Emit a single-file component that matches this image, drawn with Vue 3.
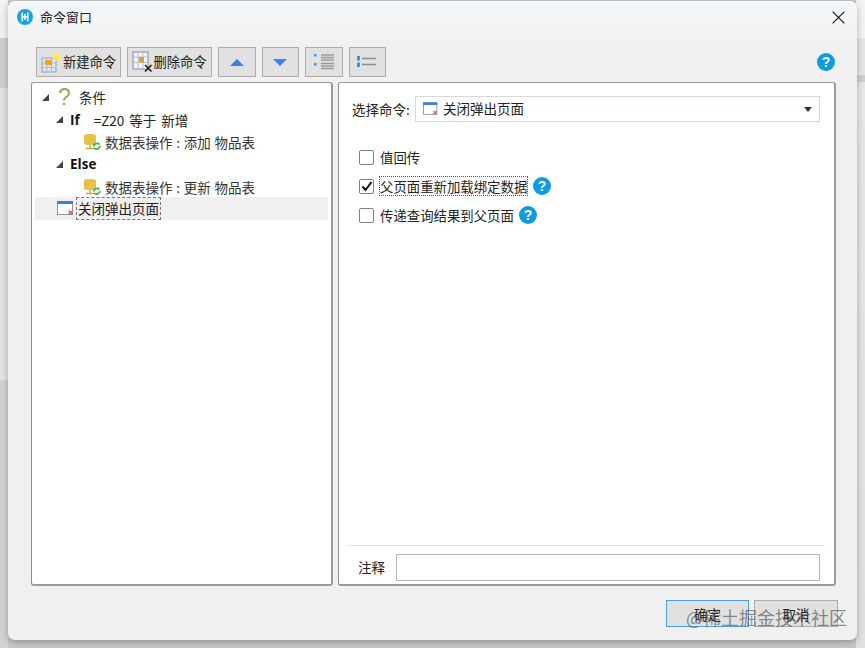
<script setup>
const tree = [
  { kind: 'root', label: '条件' },
  { kind: 'branch', label: 'If', extra: '=Z20 等于 新增' },
  { kind: 'data', label: '数据表操作 : 添加 物品表' },
  { kind: 'branch', label: 'Else', extra: '' },
  { kind: 'data', label: '数据表操作 : 更新 物品表' },
  { kind: 'close', label: '关闭弹出页面' }
]
const checks = [
  { label: '值回传', checked: false, help: false },
  { label: '父页面重新加载绑定数据', checked: true, help: true, focus: true },
  { label: '传递查询结果到父页面', checked: false, help: true }
]
</script>

<template>
  <div class="screen">
    <section class="dialog">
      <header class="titlebar">
        <span class="logo">
          <svg width="16" height="16" viewBox="0 0 16 16"><circle cx="8" cy="8" r="8" fill="#1aa3e0"/><path d="M5.200 3.500v9M10.800 3.500v9M5.200 8h5.600M8 5v6" stroke="#fff" stroke-width="1.500" fill="none"/></svg>
        </span>
        <span class="title">命令窗口</span>
        <svg class="close" width="13" height="13" viewBox="0 0 13 13"><path d="M.6.6l11.800 11.800M12.400.6L.6 12.400" stroke="#222" stroke-width="1.300"/></svg>
      </header>

      <div class="toolbar">
        <button class="tbtn text-btn new-btn">
          <svg width="22" height="24" viewBox="0 0 22 24"><rect x="1" y="8" width="14" height="14" fill="#dbe8f5" stroke="#8aa3bd"/><path d="M1 13h14M1 17.500h14M6 8v14M10.500 8v14" stroke="#a9bdd1"/><rect x="4" y="10" width="7" height="5" fill="#f4a21f"/><path d="M15 1l1.300 3.500 3.500-1.500-1.700 3.200 3.400 1.300-3.400 1 1 3.500-3.200-2-1.900 2.500-.5-3.500-3-1 3-1.500-1-3.200 2.800 1.200z" fill="#ffe455"/></svg>
          <span class="btn-text">新建命令</span>
        </button>
        <button class="tbtn text-btn del-btn">
          <svg width="21" height="24" viewBox="0 0 21 24"><rect x="1" y="2" width="15" height="17" fill="#f1f5f9" stroke="#7f8c99"/><path d="M1 7h15M1 12.500h15M6 2v17M11 2v17" stroke="#b4c2cf"/><rect x="7" y="7" width="5" height="5.500" fill="#ef9a2a"/><path d="M13 15l6.500 6.500M19.500 15L13 21.500" stroke="#222" stroke-width="1.700"/></svg>
          <span class="btn-text">删除命令</span>
        </button>
        <button class="tbtn icon-btn"><svg width="14" height="7" viewBox="0 0 14 7"><path d="M7 0l7 7H0z" fill="#3b82e8"/></svg></button>
        <button class="tbtn icon-btn"><svg width="14" height="7" viewBox="0 0 14 7"><path d="M0 0h14L7 7z" fill="#3b82e8"/></svg></button>
        <button class="tbtn icon-btn">
          <svg width="22" height="16" viewBox="0 0 22 16"><rect x="1" y="0" width="2.500" height="2.500" fill="#4a90e2"/><rect x="1" y="9" width="2.500" height="2.500" fill="#4a90e2"/><path d="M8 1h13M8 3.500h13M8 6h13M8 9.500h13M8 12h13M8 14.500h13" stroke="#9a9a9a" stroke-width="1.400"/></svg>
        </button>
        <button class="tbtn icon-btn">
          <svg width="20" height="12" viewBox="0 0 20 12"><path d="M1.500 0v4.500M1.500 6.500v4.500" stroke="#2f7fd8" stroke-width="2.600"/><path d="M5 2.500h14M5 8.500h14" stroke="#8d8d8d" stroke-width="1.400"/></svg>
        </button>
        <span class="toolbar-spacer"></span>
        <svg class="help top-help" width="18" height="18" viewBox="0 0 18 18"><circle cx="9" cy="9" r="9" fill="#0f9be3"/><text x="9" y="14" text-anchor="middle" class="help-mark" font-size="14">?</text></svg>
      </div>

      <div class="panes">
        <div class="tree-pane">
          <div v-for="row in tree" :key="row.label" class="tree-row" :class="`row-${row.kind}`">
            <span v-if="row.kind === 'root' || row.kind === 'branch'" class="caret"></span>
            <span v-if="row.kind === 'root'" class="question">?</span>
            <svg v-if="row.kind === 'data'" class="row-icon" width="17" height="18" viewBox="0 0 17 18">
              <path d="M0 2.500C0 .5 12 .5 12 2.500v8c0 2-12 2-12 0z" fill="#e8c14a"/>
              <path d="M6 12v3M2 15.500h8" stroke="#c9a634" stroke-width="1.400"/>
              <path d="M9.500 13.500a3.500 3.500 0 0 1 6-2M16 13a3.500 3.500 0 0 1-6 2" stroke="#3fb54a" stroke-width="1.800" fill="none"/>
            </svg>
            <svg v-if="row.kind === 'close'" class="row-icon" width="18" height="15" viewBox="0 0 18 15">
              <rect x=".5" y=".5" width="15" height="13" fill="#fff" stroke="#8a97a8"/>
              <rect x="0" y="0" width="16" height="3" fill="#3f7fd6"/>
              <path d="M11.500 9.500l4 4M15.500 9.500l-4 4" stroke="#e2504a" stroke-width="1.200"/>
            </svg>
            <b v-if="row.kind === 'branch'" class="branch-label">{{ row.label }}</b>
            <span v-else class="row-label">{{ row.label }}</span>
            <span v-if="row.extra" class="row-extra">{{ row.extra }}</span>
          </div>
        </div>

        <div class="detail-pane">
          <div class="select-row">
            <span class="select-label">选择命令:</span>
            <div class="select">
              <svg width="16" height="14" viewBox="0 0 18 15">
                <rect x=".5" y=".5" width="15" height="13" fill="#fff" stroke="#8a97a8"/>
                <rect x="0" y="0" width="16" height="3" fill="#3f7fd6"/>
                <path d="M11.500 9.500l4 4M15.500 9.500l-4 4" stroke="#e2504a" stroke-width="1.200"/>
              </svg>
              <span class="select-text">关闭弹出页面</span>
              <span class="select-arrow"></span>
            </div>
          </div>

          <div class="checks">
            <label v-for="c in checks" :key="c.label" class="check-row">
              <span class="box">
                <svg v-if="c.checked" width="12" height="11" viewBox="0 0 12 11"><path d="M1.500 5.500l3 3.500 6-8" stroke="#111" stroke-width="2" fill="none"/></svg>
              </span>
              <span class="check-label" :class="{ focused: c.focus }">{{ c.label }}</span>
              <svg v-if="c.help" class="help" width="18" height="18" viewBox="0 0 18 18"><circle cx="9" cy="9" r="9" fill="#0f9be3"/><text x="9" y="14" text-anchor="middle" class="help-mark" font-size="14">?</text></svg>
            </label>
          </div>

          <div class="note-row">
            <span class="note-label">注释</span>
            <div class="note-input"></div>
          </div>
        </div>
      </div>

      <footer class="footer">
        <button class="dbtn primary">确定</button>
        <button class="dbtn">取消</button>
      </footer>
    </section>
    <span class="watermark">@稀土掘金技术社区</span>
  </div>
</template>

<style>
html, body { margin: 0; padding: 0; background: #c9c9c9; overflow: hidden; }
</style>

<style scoped>
.screen {
  position: relative;
  width: 865px;
  height: 648px;
  overflow: hidden;
  background:
    linear-gradient(#f2f2f2 0, #f2f2f2 38px, #cfcfcf 38px, #cfcfcf 88px, #e4e4e4 88px, #e4e4e4 380px, #d2d2d2 380px, #d2d2d2 100%) left top / 8px 100% no-repeat,
    linear-gradient(#f4f4f4 0, #f4f4f4 38px, #e6e6e6 38px, #e6e6e6 75px, #cfcfcf 75px, #cfcfcf 82px, #e8e8e8 82px, #e0e0e0 100%) right top / 9px 100% no-repeat,
    #c8c8c8;
  font-family: "Noto Sans CJK SC", "Liberation Sans", sans-serif;
  font-size: 13.5px;
  color: #222;
  padding: 1px 8px 8px;
  box-sizing: border-box;
}
.dialog {
  height: 639px;
  background: #f0f0f0;
  border-radius: 7px;
  box-shadow: 0 2px 7px rgba(0, 0, 0, .28);
  display: flex;
  flex-direction: column;
  box-sizing: border-box;
}
.titlebar {
  height: 46px;
  flex: none;
  display: flex;
  align-items: center;
  padding: 0 12px 14px 9px;
  box-sizing: border-box;
  background: linear-gradient(#f4f8fb, #f0f0f0);
  border-radius: 7px 7px 0 0;
}
.logo { display: flex; width: 16px; height: 16px; }
.title { margin-left: 7px; font-size: 13px; color: #222; position: relative; top: -1px; }
.close { margin-left: auto; }
.toolbar {
  flex: none;
  display: flex;
  align-items: flex-start;
  height: 35px;
  padding-left: 28px;
  padding-right: 22px;
  gap: 6px;
}
.tbtn {
  height: 30px;
  background: #e1e1e1;
  border: 1px solid #adadad;
  box-sizing: border-box;
  display: flex;
  align-items: center;
  justify-content: center;
  padding: 0;
  font: inherit;
  color: #222;
  white-space: nowrap;
  flex: none;
}
.text-btn { width: 85px; font-size: 13.300px; }
.btn-text { position: relative; top: -1px; }
.icon-btn { width: 37.500px; }
.toolbar-spacer { flex: 1; }
.top-help { margin-top: 6px; flex: none; }
.panes {
  flex: none;
  display: flex;
  gap: 5px;
  height: 504px;
  margin-left: 23px;
  margin-right: 21px;
}
.tree-pane, .detail-pane {
  background: #fff;
  border: 1px solid #9b9b9b;
  border-width: 1px 2px 2px 1px;
  border-left-color: #8f8f8f;
  border-radius: 3px;
  box-sizing: border-box;
}
.tree-pane { width: 302px; flex: none; padding-top: 3px; }
.detail-pane {
  flex: 1;
  min-width: 0;
  display: flex;
  flex-direction: column;
  padding: 13px 13px 3px 13px;
}
.tree-row {
  height: 22.400px;
  display: flex;
  align-items: center;
  white-space: nowrap;
  position: relative;
  line-height: 20px;
}
.caret {
  width: 0; height: 0;
  border-style: solid;
  border-width: 0 0 7px 7px;
  border-color: transparent transparent #444 transparent;
  flex: none;
}
.row-root { padding-left: 10px; }
.question {
  margin-left: 8px;
  width: 15px;
  color: #8fb051;
  font-size: 23px;
  font-family: "Liberation Sans", sans-serif;
  text-align: center;
}
.row-root .row-label { margin-left: 7px; }
.row-branch { padding-left: 24px; }
.branch-label { margin-left: 7px; font-family: "Open Sans", sans-serif; font-weight: 700; font-size: 13.500px; color: #111; }
.row-extra { margin-left: 14px; word-spacing: 2px; }
.row-data { padding-left: 52px; }
.row-icon { flex: none; }
.row-data .row-label { margin-left: 4px; color: #333; word-spacing: .7px; }
.row-close {
  padding-left: 22px;
  margin: 0 3px;
  background: #f0f0f0;
  height: 23px;
  margin-top: -1px;
}
.row-close .row-label {
  margin-left: 1px;
  padding: 0 1px;
  border: 1px dashed #777;
  line-height: 21px;
}
.select-row { display: flex; align-items: center; flex: none; }
.select-label { width: 63px; flex: none; }
.select {
  width: 405px;
  height: 26px;
  background: #fff;
  border: 1px solid #d4d9df;
  box-sizing: border-box;
  display: flex;
  align-items: center;
  padding: 0 7px;
}
.select-text { margin-left: 4px; position: relative; top: -1px; }
.select-arrow {
  margin-left: auto;
  width: 0; height: 0;
  border-style: solid;
  border-width: 5px 4px 0 4px;
  border-color: #333 transparent transparent transparent;
}
.checks {
  flex: none;
  display: flex;
  flex-direction: column;
  margin-top: 24px;
  gap: 7px;
  margin-left: 7px;
}
.check-row { display: flex; align-items: center; height: 22px; }
.box {
  width: 15px; height: 15px;
  border: 1px solid #7f7f7f;
  background: #fff;
  border-radius: 2px;
  box-sizing: border-box;
  display: flex;
  align-items: center;
  justify-content: center;
  flex: none;
}
.check-label { margin-left: 6px; white-space: nowrap; font-size: 13.400px; }
.check-label.focused { border: 1px dotted #555; margin-left: 5px; line-height: 18px; }
.check-row .help { margin-left: 5px; flex: none; }
.help-mark { fill: #fff; font-weight: 700; font-family: "Liberation Sans", sans-serif; }
.note-row {
  margin-top: auto;
  border-top: 1px solid #e3e3e3;
  display: flex;
  align-items: center;
  padding-top: 8px;
  margin-left: -5px;
  margin-right: -4px;
}
.note-label { margin-left: 11px; width: 38px; flex: none; position: relative; top: -1px; }
.note-input {
  width: 424px;
  flex: none;
  height: 27px;
  border: 1px solid #b5b5b5;
  background: #fff;
  box-sizing: border-box;
}
.footer {
  flex: 1;
  display: flex;
  justify-content: flex-end;
  align-items: flex-start;
  gap: 5px;
  padding: 14px 19px 0 0;
}
.dbtn {
  width: 84px;
  height: 27px;
  background: #e1e1e1;
  border: 1px solid #adadad;
  box-sizing: border-box;
  padding: 0;
  font: inherit;
  color: #222;
}
.dbtn.primary { border-color: #4d9ed9; width: 83px; }
.watermark {
  position: absolute;
  left: 686px;
  top: 605px;
  font-size: 18px;
  line-height: 24px;
  color: rgba(70, 70, 70, .6);
  white-space: nowrap;
}
</style>
